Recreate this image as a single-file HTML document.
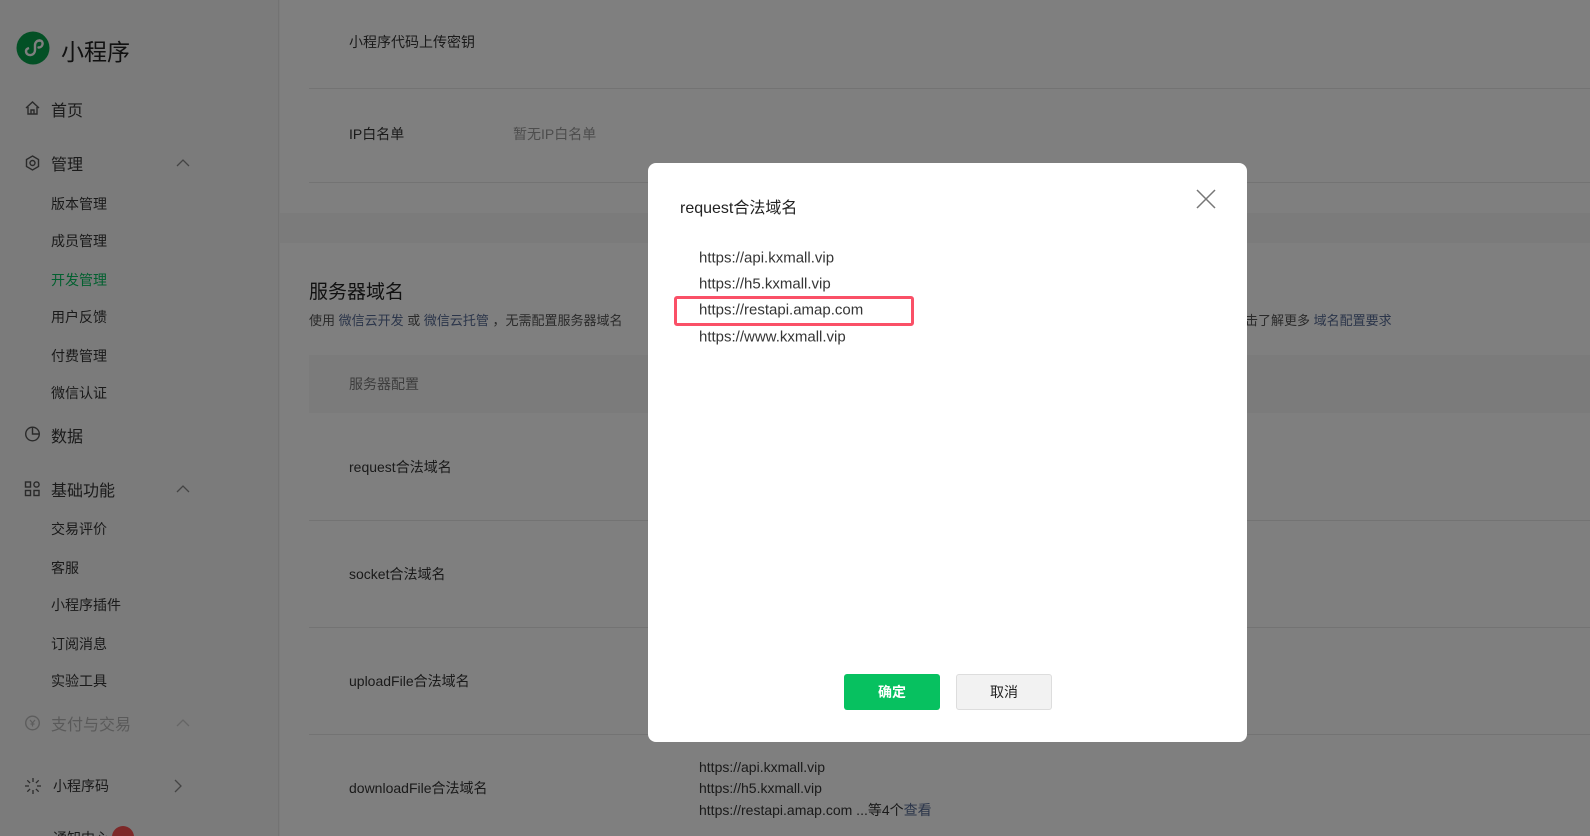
<!DOCTYPE html>
<html style="background:#7b7b7b"><head><meta charset="utf-8"><style>
*{margin:0;padding:0;box-sizing:border-box}
html,body{width:1590px;height:836px;overflow:hidden}
body{position:relative;background:#f6f6f6;font-family:"Liberation Sans","Noto Sans CJK SC",sans-serif;color:#353535}
.a{position:absolute;white-space:nowrap}
.side{position:absolute;left:0;top:0;width:279px;height:836px;background:#f6f6f6;border-right:1px solid #e7e7e7}
.m{font-size:16px;color:#353535;transform:translateY(-50%)}
.s{font-size:14px;color:#353535;transform:translateY(-50%)}
.ic{position:absolute;transform:translateY(-50%)}
.card{position:absolute;left:280px;width:1310px;background:#fff}
.t{font-size:14px;color:#353535;transform:translateY(-50%)}
.line{position:absolute;height:1px;background:#e7e7e7}
.ov{position:fixed;left:0;top:0;width:1590px;height:900px;background:rgba(0,0,0,.5)}
.modal{position:absolute;left:648px;top:163px;width:599px;height:579px;background:#fff;border-radius:8px}
.u{font-size:15px;color:#353535;transform:translateY(-50%)}
</style></head><body>
<div class="side">
<svg class="a" style="left:16px;top:31px" width="34" height="34" viewBox="0 0 34 34"><circle cx="17" cy="17" r="16.5" fill="#07a04a"/><path d="M10 20c0 3 2.5 4.5 5 4s4-2.5 4-5v-5c0-2.5 2-4.5 4.5-4.5" stroke="#fff" stroke-width="2.4" fill="none" stroke-linecap="round"/><path d="M13 17c-1.5.5-3 1.5-3 3" stroke="#fff" stroke-width="2.4" fill="none"/><path d="M23.5 9.5c2.5 0 3.5 2 3 4s-2.5 3-4 3" stroke="#fff" stroke-width="2.4" fill="none" stroke-linecap="round"/></svg>
<div class="a" style="left:61px;top:33px;font-size:23px;color:#222">小程序</div>
<svg class="ic" style="left:24px;top:108px" width="17" height="16" viewBox="0 0 17 16"><path d="M2 8L8.5 2 15 8M4 7v7h9V7M7 14v-4h3v4" stroke="#555" stroke-width="1.4" fill="none"/></svg>
<div class="a m" style="left:51px;top:109px">首页</div>
<svg class="ic" style="left:24px;top:163px" width="17" height="17" viewBox="0 0 17 17"><path d="M8.5 1.5l6 3.5v7l-6 3.5-6-3.5V5z" stroke="#555" stroke-width="1.4" fill="none"/><circle cx="8.5" cy="8.5" r="2.5" stroke="#555" stroke-width="1.4" fill="none"/></svg>
<div class="a m" style="left:51px;top:163px">管理</div>
<svg class="ic" style="left:176px;top:163px" width="14" height="8"><path d="M1 7l6-6 6 6" stroke="#888" fill="none" stroke-width="1.3"/></svg>
<div class="a s" style="left:51px;top:204px">版本管理</div>
<div class="a s" style="left:51px;top:241px">成员管理</div>
<div class="a s" style="left:51px;top:280px;color:#07c160">开发管理</div>
<div class="a s" style="left:51px;top:317px">用户反馈</div>
<div class="a s" style="left:51px;top:356px">付费管理</div>
<div class="a s" style="left:51px;top:393px">微信认证</div>
<svg class="ic" style="left:24px;top:434px" width="17" height="17" viewBox="0 0 17 17"><circle cx="8.5" cy="8.5" r="6.8" stroke="#555" stroke-width="1.4" fill="none"/><path d="M8.5 1.7v6.8h6.8" stroke="#555" stroke-width="1.4" fill="none"/></svg>
<div class="a m" style="left:51px;top:435px">数据</div>
<svg class="ic" style="left:24px;top:489px" width="17" height="17" viewBox="0 0 17 17"><rect x="1.5" y="1.5" width="5" height="5" stroke="#555" stroke-width="1.4" fill="none"/><rect x="1.5" y="10" width="5" height="5" stroke="#555" stroke-width="1.4" fill="none"/><rect x="10" y="10" width="5" height="5" stroke="#555" stroke-width="1.4" fill="none"/><circle cx="12.5" cy="4" r="2.6" stroke="#555" stroke-width="1.4" fill="none"/></svg>
<div class="a m" style="left:51px;top:489px">基础功能</div>
<svg class="ic" style="left:176px;top:489px" width="14" height="8"><path d="M1 7l6-6 6 6" stroke="#888" fill="none" stroke-width="1.3"/></svg>
<div class="a s" style="left:51px;top:529px">交易评价</div>
<div class="a s" style="left:51px;top:568px">客服</div>
<div class="a s" style="left:51px;top:605px">小程序插件</div>
<div class="a s" style="left:51px;top:644px">订阅消息</div>
<div class="a s" style="left:51px;top:681px">实验工具</div>
<svg class="ic" style="left:24px;top:723px" width="17" height="17" viewBox="0 0 17 17"><circle cx="8.5" cy="8.5" r="6.8" stroke="#bbb" stroke-width="1.4" fill="none"/><path d="M6 5.5l2.5 3 2.5-3M8.5 8.5v3.5M6.5 9.5h4" stroke="#bbb" stroke-width="1.2" fill="none"/></svg>
<div class="a m" style="left:51px;top:723px;color:#b5b5b5">支付与交易</div>
<svg class="ic" style="left:176px;top:723px" width="14" height="8"><path d="M1 7l6-6 6 6" stroke="#ccc" fill="none" stroke-width="1.3"/></svg>
<svg class="ic" style="left:24px;top:786px" width="18" height="18" viewBox="0 0 18 18"><path d="M9 1v4M9 13v4M1 9h4M13 9h4M3.3 3.3l2.8 2.8M11.9 11.9l2.8 2.8M14.7 3.3l-2.8 2.8M6.1 11.9l-2.8 2.8" stroke="#555" stroke-width="1.3"/></svg>
<div class="a s" style="left:53px;top:786px">小程序码</div>
<svg class="ic" style="left:174px;top:786px" width="8" height="14"><path d="M1 1l6 6-6 6" stroke="#888" fill="none" stroke-width="1.3"/></svg>
<div class="a s" style="left:53px;top:838px">通知中心</div>
<div class="a" style="left:112px;top:826px;width:22px;height:22px;border-radius:11px;background:#fa5151"></div>
</div>
<div class="card" style="top:0;height:213px">
<div class="a t" style="left:69px;top:42px">小程序代码上传密钥</div>
<div class="line" style="left:29px;top:88px;width:1281px"></div>
<div class="a t" style="left:69px;top:134px">IP白名单</div>
<div class="a t" style="left:233px;top:134px;color:#9a9a9a">暂无IP白名单</div>
<div class="line" style="left:29px;top:182px;width:1281px"></div>
</div>
<div class="card" style="top:243px;height:593px">
<div class="a" style="left:29px;top:34px;font-size:19px;color:#222">服务器域名</div>
<div class="a" style="left:29px;top:67px;font-size:13px;color:#555">使用 <span style="color:#576b95">微信云开发</span> 或 <span style="color:#576b95">微信云托管</span> ，无需配置服务器域名</div>
<div class="a" style="left:965px;top:67px;font-size:13px;color:#555">击了解更多 <span style="color:#576b95">域名配置要求</span></div>
<div class="a" style="left:29px;top:112px;width:1281px;height:58px;background:#f6f6f6"></div>
<div class="a t" style="left:69px;top:141px;color:#7a7a7a">服务器配置</div>
<div class="a t" style="left:69px;top:224px">request合法域名</div>
<div class="line" style="left:29px;top:277px;width:1281px"></div>
<div class="a t" style="left:69px;top:331px">socket合法域名</div>
<div class="line" style="left:29px;top:384px;width:1281px"></div>
<div class="a t" style="left:69px;top:438px">uploadFile合法域名</div>
<div class="line" style="left:29px;top:491px;width:1281px"></div>
<div class="a t" style="left:69px;top:545px">downloadFile合法域名</div>
<div class="a t" style="left:419px;top:524px">https://api.kxmall.vip</div>
<div class="a t" style="left:419px;top:545px">https://h5.kxmall.vip</div>
<div class="a t" style="left:419px;top:567px">https://restapi.amap.com ...等4个<span style="color:#576b95">查看</span></div>
</div>
<div class="ov"></div>
<div class="modal">
<div class="a" style="left:32px;top:43px;font-size:16px;color:#222;transform:translateY(-50%)">request合法域名</div>
<svg class="a" style="left:548px;top:26px" width="20" height="20"><path d="M1 1l18 18M19 1L1 19" stroke="#777" stroke-width="1.5"/></svg>
<div class="a u" style="left:51px;top:95px">https://api.kxmall.vip</div>
<div class="a u" style="left:51px;top:121px">https://h5.kxmall.vip</div>
<div class="a u" style="left:51px;top:147px">https://restapi.amap.com</div>
<div class="a u" style="left:51px;top:174px">https://www.kxmall.vip</div>
<div class="a" style="left:26px;top:133px;width:240px;height:30px;border:3px solid #fa5067;border-radius:3px"></div>
<div class="a" style="left:196px;top:511px;width:96px;height:36px;background:#07c160;border-radius:3px;color:#fff;font-size:14px;font-weight:bold;text-align:center;line-height:36px">确定</div>
<div class="a" style="left:308px;top:511px;width:96px;height:36px;background:#f2f2f2;border:1px solid #ddd;border-radius:3px;color:#222;font-size:14px;text-align:center;line-height:34px">取消</div>
</div>
</body></html>
